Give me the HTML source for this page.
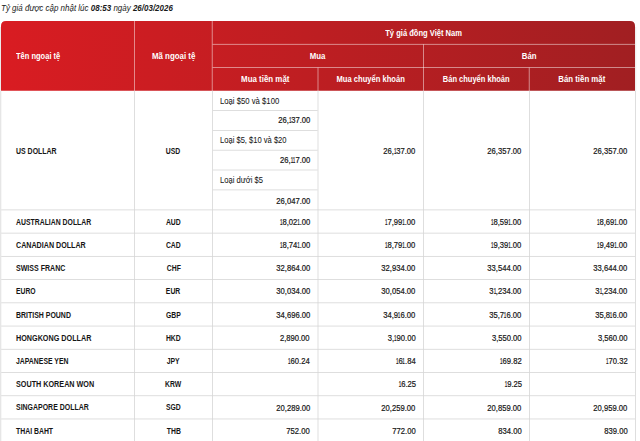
<!DOCTYPE html><html><head><meta charset="utf-8"><style>
html,body{margin:0;padding:0;background:#fff;width:640px;height:441px;overflow:hidden;position:relative}
body{font-family:"Liberation Sans",sans-serif;color:#161616}
.a{position:absolute;box-sizing:border-box}
svg{position:absolute;left:0;top:0}
.t{white-space:nowrap}
.t span{display:inline-block;line-height:normal;vertical-align:middle}
.hd{color:#fff;font-weight:bold;font-size:8.6px;text-align:center}
.hd span{transform:translateY(0px) scaleX(0.91);transform-origin:50% 50%}
.hd.l{text-align:left;padding-left:15.4px}
.hd.l span{transform-origin:0 50%}
.nm{font-weight:bold;font-size:8.6px;padding-left:15.1px;text-align:left}
.nm span{transform:translateY(-0.1px) scaleX(0.795);transform-origin:0 50%}
.cd{font-weight:bold;font-size:8.6px;text-align:center}
.cd span{transform:translateY(-0.1px) scaleX(0.795);transform-origin:50% 50%}
.nu{font-size:8.4px;padding-right:8px;text-align:right;-webkit-text-stroke:0.2px currentColor}
.nu span{transform:translateY(-0.5px) scaleX(0.91);transform-origin:100% 50%}
.lb{font-size:8.3px;padding-left:7.8px;text-align:left;-webkit-text-stroke:0.05px currentColor}
.lb span{transform:translateY(0.3px) scaleX(0.93);transform-origin:0 50%}
.top{position:absolute;left:0.9px;top:1px;font-style:italic;font-size:9.6px;color:#1a1a1a;white-space:nowrap;line-height:13px;transform:scaleX(0.832);transform-origin:0 0}
.top b{font-weight:bold}
.nu i{font-style:normal;display:inline-block;transform:scaleX(0.6);margin:0 -1.0px 0 -1.0px}
</style></head><body>

<div class="top">Tỷ giá được cập nhật lúc <b>08:53</b> ngày <b>26/03/2026</b></div>
<svg width="640" height="441" viewBox="0 0 640 441"><defs><linearGradient id="g" x1="0" y1="0" x2="1" y2="0"><stop offset="0" stop-color="#d91c22"/><stop offset="0.48" stop-color="#be1e22"/><stop offset="1" stop-color="#a11f22"/></linearGradient></defs><path fill="url(#g)" d="M1.0 90.8V26Q1.0 21 6.0 21H630.0Q635.0 21 635.0 26V90.8Z"/><rect x="134" y="21" width="0.8" height="69.8" fill="#ffffff" fill-opacity="0.6"/><rect x="211.8" y="21" width="0.8" height="69.8" fill="#ffffff" fill-opacity="0.6"/><rect x="317.6" y="67.6" width="0.8" height="23.2" fill="#ffffff" fill-opacity="0.6"/><rect x="423.2" y="44.3" width="0.8" height="46.5" fill="#ffffff" fill-opacity="0.6"/><rect x="528.8" y="67.6" width="0.8" height="23.2" fill="#ffffff" fill-opacity="0.6"/><rect x="212.6" y="43.9" width="422.4" height="0.8" fill="#ffffff" fill-opacity="0.6"/><rect x="212.6" y="67.2" width="422.4" height="0.8" fill="#ffffff" fill-opacity="0.6"/><rect x="0.4" y="90.8" width="0.8" height="350.2" fill="#d6d6d6" fill-opacity="1"/><rect x="134.1" y="90.8" width="0.8" height="350.2" fill="#d6d6d6" fill-opacity="1"/><rect x="212.1" y="90.8" width="0.8" height="350.2" fill="#d6d6d6" fill-opacity="1"/><rect x="317.6" y="90.8" width="0.8" height="350.2" fill="#d6d6d6" fill-opacity="1"/><rect x="423.1" y="90.8" width="0.8" height="350.2" fill="#d6d6d6" fill-opacity="1"/><rect x="529.1" y="90.8" width="0.8" height="350.2" fill="#d6d6d6" fill-opacity="1"/><rect x="635" y="90.8" width="0.8" height="350.2" fill="#d6d6d6" fill-opacity="1"/><rect x="0.2" y="27" width="0.8" height="63.8" fill="#e6e6e6" fill-opacity="1"/><rect x="635.4" y="27" width="0.8" height="63.8" fill="#e6e6e6" fill-opacity="1"/><rect x="212.9" y="110.1" width="104.7" height="0.8" fill="#d6d6d6" fill-opacity="1"/><rect x="212.9" y="130" width="104.7" height="0.8" fill="#d6d6d6" fill-opacity="1"/><rect x="212.9" y="149.8" width="104.7" height="0.8" fill="#d6d6d6" fill-opacity="1"/><rect x="212.9" y="169.6" width="104.7" height="0.8" fill="#d6d6d6" fill-opacity="1"/><rect x="212.9" y="189.5" width="104.7" height="0.8" fill="#d6d6d6" fill-opacity="1"/><rect x="1.2" y="209.5" width="633.8" height="0.8" fill="#d6d6d6" fill-opacity="1"/><rect x="1.2" y="232.73" width="633.8" height="0.8" fill="#d6d6d6" fill-opacity="1"/><rect x="1.2" y="255.96" width="633.8" height="0.8" fill="#d6d6d6" fill-opacity="1"/><rect x="1.2" y="279.19" width="633.8" height="0.8" fill="#d6d6d6" fill-opacity="1"/><rect x="1.2" y="302.42" width="633.8" height="0.8" fill="#d6d6d6" fill-opacity="1"/><rect x="1.2" y="325.65" width="633.8" height="0.8" fill="#d6d6d6" fill-opacity="1"/><rect x="1.2" y="348.88" width="633.8" height="0.8" fill="#d6d6d6" fill-opacity="1"/><rect x="1.2" y="372.11" width="633.8" height="0.8" fill="#d6d6d6" fill-opacity="1"/><rect x="1.2" y="395.34" width="633.8" height="0.8" fill="#d6d6d6" fill-opacity="1"/><rect x="1.2" y="418.57" width="633.8" height="0.8" fill="#d6d6d6" fill-opacity="1"/></svg>
<div class="a t hd l" style="left:1px;top:21px;width:133.4px;height:69.8px;line-height:69.8px;"><span style="transform:translateY(0px) scaleX(0.874)">Tên ngoại tệ</span></div>
<div class="a t hd" style="left:134.4px;top:21px;width:77.8px;height:69.8px;line-height:69.8px;"><span style="transform:translateY(0px) scaleX(0.92)">Mã ngoại tệ</span></div>
<div class="a t hd" style="left:212.2px;top:21px;width:422.8px;height:23.3px;line-height:23.3px;"><span style="transform:translateY(0px) scaleX(0.88)">Tỷ giá đồng Việt Nam</span></div>
<div class="a t hd" style="left:212.2px;top:44.3px;width:211.4px;height:23.3px;line-height:23.3px;"><span>Mua</span></div>
<div class="a t hd" style="left:423.6px;top:44.3px;width:211.4px;height:23.3px;line-height:23.3px;"><span>Bán</span></div>
<div class="a t hd" style="left:212.2px;top:67.6px;width:105.8px;height:23.2px;line-height:23.2px;"><span style="transform:translateY(0px) scaleX(0.92)">Mua tiền mặt</span></div>
<div class="a t hd" style="left:318px;top:67.6px;width:105.6px;height:23.2px;line-height:23.2px;"><span style="transform:translateY(0px) scaleX(0.883)">Mua chuyển khoản</span></div>
<div class="a t hd" style="left:423.6px;top:67.6px;width:105.6px;height:23.2px;line-height:23.2px;"><span style="transform:translateY(0px) scaleX(0.874)">Bán chuyển khoản</span></div>
<div class="a t hd" style="left:529.2px;top:67.6px;width:106.2px;height:23.2px;line-height:23.2px;"><span>Bán tiền mặt</span></div>
<div class="a t nm" style="left:1px;top:90.8px;width:133.5px;height:119.1px;line-height:119.1px;"><span style="transform:translateY(-0.1px) scaleX(0.81)">US DOLLAR</span></div>
<div class="a t cd" style="left:134.5px;top:90.8px;width:78px;height:119.1px;line-height:119.1px;"><span>USD</span></div>
<div class="a t lb" style="left:212.5px;top:90.8px;width:105.5px;height:19.7px;line-height:19.7px;"><span style="transform:translateY(0.3px) scaleX(0.93)">Loại $50 và $100</span></div>
<div class="a t nu" style="left:212.5px;top:110.5px;width:105.5px;height:19.9px;line-height:19.9px;"><span>26,<i>1</i>37.00</span></div>
<div class="a t lb" style="left:212.5px;top:130.4px;width:105.5px;height:19.8px;line-height:19.8px;"><span style="transform:translateY(0.3px) scaleX(0.913)">Loại $5, $10 và $20</span></div>
<div class="a t nu" style="left:212.5px;top:150.2px;width:105.5px;height:19.8px;line-height:19.8px;"><span>26,<i>1</i><i>1</i>7.00</span></div>
<div class="a t lb" style="left:212.5px;top:170px;width:105.5px;height:19.9px;line-height:19.9px;"><span style="transform:translateY(0.3px) scaleX(0.915)">Loại dưới $5</span></div>
<div class="a t nu" style="left:212.5px;top:189.9px;width:105.5px;height:20px;line-height:20px;"><span>26,047.00</span></div>
<div class="a t nu" style="left:318px;top:90.8px;width:105.5px;height:119.1px;line-height:119.1px;"><span>26,<i>1</i>37.00</span></div>
<div class="a t nu" style="left:423.5px;top:90.8px;width:106px;height:119.1px;line-height:119.1px;"><span>26,357.00</span></div>
<div class="a t nu" style="left:529.5px;top:90.8px;width:105.9px;height:119.1px;line-height:119.1px;"><span>26,357.00</span></div>
<div class="a t nm" style="left:1px;top:209.9px;width:133.5px;height:23.23px;line-height:23.23px;"><span style="transform:translateY(-0.1px) scaleX(0.8)">AUSTRALIAN DOLLAR</span></div>
<div class="a t cd" style="left:134.5px;top:209.9px;width:78px;height:23.23px;line-height:23.23px;"><span>AUD</span></div>
<div class="a t nu" style="left:212.5px;top:209.9px;width:105.5px;height:23.23px;line-height:23.23px;"><span><i>1</i>8,02<i>1</i>.00</span></div>
<div class="a t nu" style="left:318px;top:209.9px;width:105.5px;height:23.23px;line-height:23.23px;"><span><i>1</i>7,99<i>1</i>.00</span></div>
<div class="a t nu" style="left:423.5px;top:209.9px;width:106px;height:23.23px;line-height:23.23px;"><span><i>1</i>8,59<i>1</i>.00</span></div>
<div class="a t nu" style="left:529.5px;top:209.9px;width:105.9px;height:23.23px;line-height:23.23px;"><span><i>1</i>8,69<i>1</i>.00</span></div>
<div class="a t nm" style="left:1px;top:233.13px;width:133.5px;height:23.23px;line-height:23.23px;"><span style="transform:translateY(-0.1px) scaleX(0.83)">CANADIAN DOLLAR</span></div>
<div class="a t cd" style="left:134.5px;top:233.13px;width:78px;height:23.23px;line-height:23.23px;"><span>CAD</span></div>
<div class="a t nu" style="left:212.5px;top:233.13px;width:105.5px;height:23.23px;line-height:23.23px;"><span><i>1</i>8,74<i>1</i>.00</span></div>
<div class="a t nu" style="left:318px;top:233.13px;width:105.5px;height:23.23px;line-height:23.23px;"><span><i>1</i>8,79<i>1</i>.00</span></div>
<div class="a t nu" style="left:423.5px;top:233.13px;width:106px;height:23.23px;line-height:23.23px;"><span><i>1</i>9,39<i>1</i>.00</span></div>
<div class="a t nu" style="left:529.5px;top:233.13px;width:105.9px;height:23.23px;line-height:23.23px;"><span><i>1</i>9,49<i>1</i>.00</span></div>
<div class="a t nm" style="left:1px;top:256.36px;width:133.5px;height:23.23px;line-height:23.23px;"><span style="transform:translateY(-0.1px) scaleX(0.82)">SWISS FRANC</span></div>
<div class="a t cd" style="left:134.5px;top:256.36px;width:78px;height:23.23px;line-height:23.23px;"><span>CHF</span></div>
<div class="a t nu" style="left:212.5px;top:256.36px;width:105.5px;height:23.23px;line-height:23.23px;"><span>32,864.00</span></div>
<div class="a t nu" style="left:318px;top:256.36px;width:105.5px;height:23.23px;line-height:23.23px;"><span>32,934.00</span></div>
<div class="a t nu" style="left:423.5px;top:256.36px;width:106px;height:23.23px;line-height:23.23px;"><span>33,544.00</span></div>
<div class="a t nu" style="left:529.5px;top:256.36px;width:105.9px;height:23.23px;line-height:23.23px;"><span>33,644.00</span></div>
<div class="a t nm" style="left:1px;top:279.59px;width:133.5px;height:23.23px;line-height:23.23px;"><span style="transform:translateY(-0.1px) scaleX(0.79)">EURO</span></div>
<div class="a t cd" style="left:134.5px;top:279.59px;width:78px;height:23.23px;line-height:23.23px;"><span>EUR</span></div>
<div class="a t nu" style="left:212.5px;top:279.59px;width:105.5px;height:23.23px;line-height:23.23px;"><span>30,034.00</span></div>
<div class="a t nu" style="left:318px;top:279.59px;width:105.5px;height:23.23px;line-height:23.23px;"><span>30,054.00</span></div>
<div class="a t nu" style="left:423.5px;top:279.59px;width:106px;height:23.23px;line-height:23.23px;"><span>3<i>1</i>,234.00</span></div>
<div class="a t nu" style="left:529.5px;top:279.59px;width:105.9px;height:23.23px;line-height:23.23px;"><span>3<i>1</i>,234.00</span></div>
<div class="a t nm" style="left:1px;top:302.82px;width:133.5px;height:23.23px;line-height:23.23px;"><span style="transform:translateY(-0.1px) scaleX(0.81)">BRITISH POUND</span></div>
<div class="a t cd" style="left:134.5px;top:302.82px;width:78px;height:23.23px;line-height:23.23px;"><span>GBP</span></div>
<div class="a t nu" style="left:212.5px;top:302.82px;width:105.5px;height:23.23px;line-height:23.23px;"><span>34,696.00</span></div>
<div class="a t nu" style="left:318px;top:302.82px;width:105.5px;height:23.23px;line-height:23.23px;"><span>34,9<i>1</i>6.00</span></div>
<div class="a t nu" style="left:423.5px;top:302.82px;width:106px;height:23.23px;line-height:23.23px;"><span>35,7<i>1</i>6.00</span></div>
<div class="a t nu" style="left:529.5px;top:302.82px;width:105.9px;height:23.23px;line-height:23.23px;"><span>35,8<i>1</i>6.00</span></div>
<div class="a t nm" style="left:1px;top:326.05px;width:133.5px;height:23.23px;line-height:23.23px;"><span style="transform:translateY(-0.1px) scaleX(0.84)">HONGKONG DOLLAR</span></div>
<div class="a t cd" style="left:134.5px;top:326.05px;width:78px;height:23.23px;line-height:23.23px;"><span>HKD</span></div>
<div class="a t nu" style="left:212.5px;top:326.05px;width:105.5px;height:23.23px;line-height:23.23px;"><span>2,890.00</span></div>
<div class="a t nu" style="left:318px;top:326.05px;width:105.5px;height:23.23px;line-height:23.23px;"><span>3,<i>1</i>90.00</span></div>
<div class="a t nu" style="left:423.5px;top:326.05px;width:106px;height:23.23px;line-height:23.23px;"><span>3,550.00</span></div>
<div class="a t nu" style="left:529.5px;top:326.05px;width:105.9px;height:23.23px;line-height:23.23px;"><span>3,560.00</span></div>
<div class="a t nm" style="left:1px;top:349.28px;width:133.5px;height:23.23px;line-height:23.23px;"><span style="transform:translateY(-0.1px) scaleX(0.8)">JAPANESE YEN</span></div>
<div class="a t cd" style="left:134.5px;top:349.28px;width:78px;height:23.23px;line-height:23.23px;"><span>JPY</span></div>
<div class="a t nu" style="left:212.5px;top:349.28px;width:105.5px;height:23.23px;line-height:23.23px;"><span><i>1</i>60.24</span></div>
<div class="a t nu" style="left:318px;top:349.28px;width:105.5px;height:23.23px;line-height:23.23px;"><span><i>1</i>6<i>1</i>.84</span></div>
<div class="a t nu" style="left:423.5px;top:349.28px;width:106px;height:23.23px;line-height:23.23px;"><span><i>1</i>69.82</span></div>
<div class="a t nu" style="left:529.5px;top:349.28px;width:105.9px;height:23.23px;line-height:23.23px;"><span><i>1</i>70.32</span></div>
<div class="a t nm" style="left:1px;top:372.51px;width:133.5px;height:23.23px;line-height:23.23px;"><span style="transform:translateY(-0.1px) scaleX(0.84)">SOUTH KOREAN WON</span></div>
<div class="a t cd" style="left:134.5px;top:372.51px;width:78px;height:23.23px;line-height:23.23px;"><span>KRW</span></div>
<div class="a t nu" style="left:318px;top:372.51px;width:105.5px;height:23.23px;line-height:23.23px;"><span><i>1</i>6.25</span></div>
<div class="a t nu" style="left:423.5px;top:372.51px;width:106px;height:23.23px;line-height:23.23px;"><span><i>1</i>9.25</span></div>
<div class="a t nm" style="left:1px;top:395.74px;width:133.5px;height:23.23px;line-height:23.23px;"><span style="transform:translateY(-0.1px) scaleX(0.81)">SINGAPORE DOLLAR</span></div>
<div class="a t cd" style="left:134.5px;top:395.74px;width:78px;height:23.23px;line-height:23.23px;"><span>SGD</span></div>
<div class="a t nu" style="left:212.5px;top:395.74px;width:105.5px;height:23.23px;line-height:23.23px;"><span>20,289.00</span></div>
<div class="a t nu" style="left:318px;top:395.74px;width:105.5px;height:23.23px;line-height:23.23px;"><span>20,259.00</span></div>
<div class="a t nu" style="left:423.5px;top:395.74px;width:106px;height:23.23px;line-height:23.23px;"><span>20,859.00</span></div>
<div class="a t nu" style="left:529.5px;top:395.74px;width:105.9px;height:23.23px;line-height:23.23px;"><span>20,959.00</span></div>
<div class="a t nm" style="left:1px;top:418.97px;width:133.5px;height:23.23px;line-height:23.23px;"><span style="transform:translateY(-0.1px) scaleX(0.8)">THAI BAHT</span></div>
<div class="a t cd" style="left:134.5px;top:418.97px;width:78px;height:23.23px;line-height:23.23px;"><span>THB</span></div>
<div class="a t nu" style="left:212.5px;top:418.97px;width:105.5px;height:23.23px;line-height:23.23px;"><span>752.00</span></div>
<div class="a t nu" style="left:318px;top:418.97px;width:105.5px;height:23.23px;line-height:23.23px;"><span>772.00</span></div>
<div class="a t nu" style="left:423.5px;top:418.97px;width:106px;height:23.23px;line-height:23.23px;"><span>834.00</span></div>
<div class="a t nu" style="left:529.5px;top:418.97px;width:105.9px;height:23.23px;line-height:23.23px;"><span>839.00</span></div>
</body></html>
